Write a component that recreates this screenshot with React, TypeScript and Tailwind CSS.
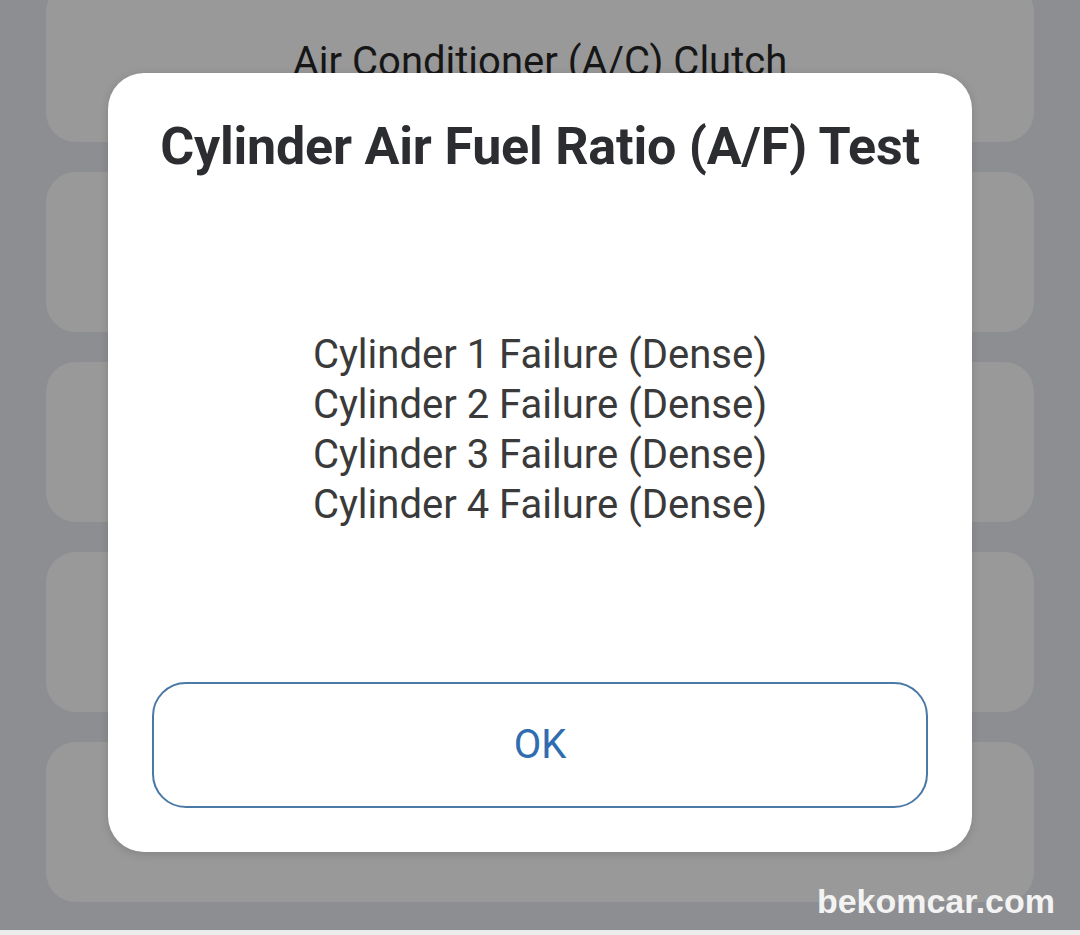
import React from 'react';

const failures = [1, 2, 3, 4].map((n) => `Cylinder ${n} Failure (Dense)`);

function BackgroundList() {
    return (
        <div className="flex flex-col gap-[30px] px-[46px] -mt-[18px]">
            <div className="h-[160px] rounded-[30px] bg-[#999999] flex items-center justify-center text-[40px] text-[#161616]">
                Air Conditioner (A/C) Clutch
            </div>
            {[0, 1, 2, 3].map((i) => (
                <div key={i} className="h-[160px] rounded-[30px] bg-[#999999]" />
            ))}
        </div>
    );
}

function ResultDialog() {
    return (
        <div className="absolute left-[108px] top-[73px] w-[864px] h-[779px] rounded-[36px] bg-white shadow-[0_2px_10px_rgba(0,0,0,0.15)] flex flex-col px-[44px] pt-[44px] pb-[44px]">
            <h2 className="text-center text-[52px] leading-[60px] font-bold text-[#2b2d31] tracking-[-0.2px] whitespace-nowrap">
                Cylinder Air Fuel Ratio (A/F) Test
            </h2>
            <div className="flex-1 flex flex-col items-center pt-[153px]">
                {failures.map((line) => (
                    <p key={line} className="text-[40px] leading-[50px] text-[#3a3a3a]">
                        {line}
                    </p>
                ))}
            </div>
            <button className="h-[126px] rounded-[34px] border-2 border-[#4a79a6] text-[40px] text-[#2f6cb0] bg-white">
                OK
            </button>
        </div>
    );
}

export default function App() {
    return (
        <div
            className="relative w-[1080px] h-[935px] overflow-hidden bg-[#8d8e92] flex flex-col"
            style={{ fontFamily: 'Roboto, "Noto Sans", sans-serif' }}
        >
            <div className="flex-1 overflow-hidden">
                <BackgroundList />
            </div>
            <div className="h-[5px] bg-[#ececec]" />
            <ResultDialog />
            <span
                className="absolute right-[25px] bottom-[17px] text-[34px] font-bold text-[#f3f3f3] leading-none"
                style={{ fontFamily: '"Liberation Sans", Arial, sans-serif' }}
            >
                bekomcar.com
            </span>
        </div>
    );
}
